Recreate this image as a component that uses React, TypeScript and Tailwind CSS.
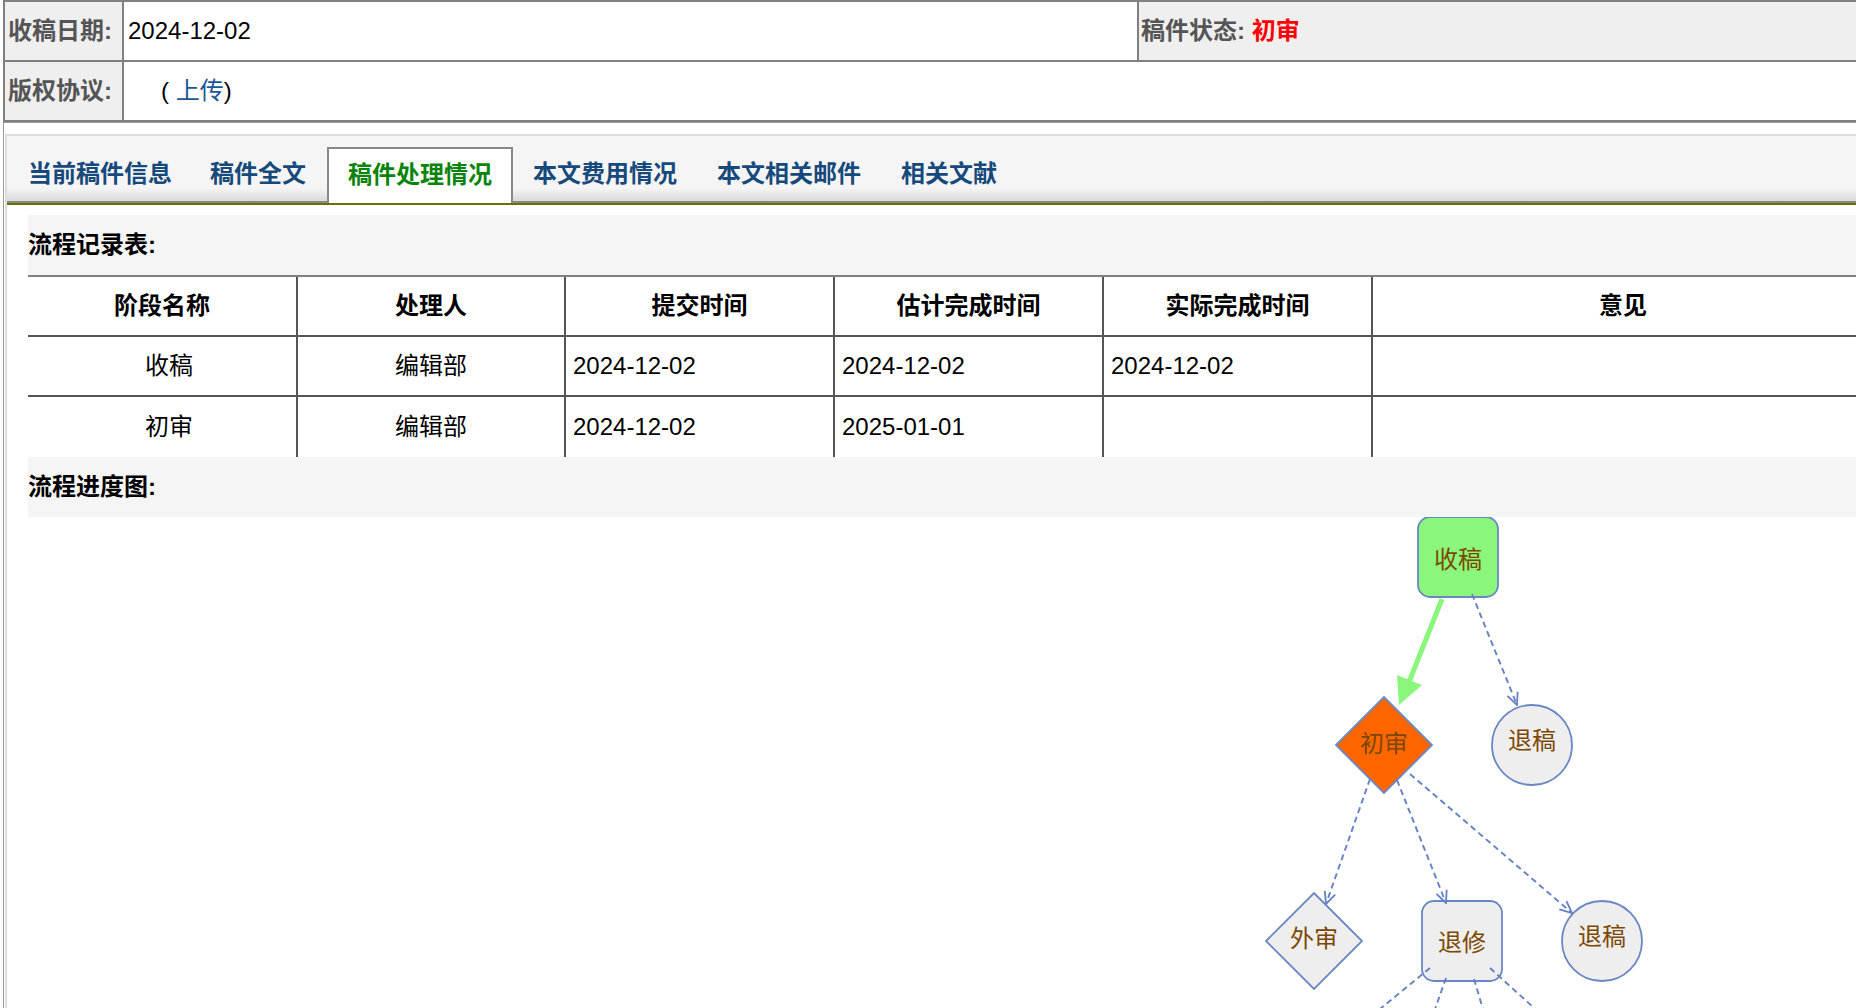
const tabs = [
  { name: "当前稿件信息", active: false },
  { name: "稿件全文", active: false },
  { name: "稿件处理情况", active: true },
  { name: "本文费用情况", active: false },
  { name: "本文相关邮件", active: false },
  { name: "相关文献", active: false },
]

const columns = ["阶段名称", "处理人", "提交时间", "估计完成时间", "实际完成时间", "意见"]

const records = [
  { stage: "收稿", handler: "编辑部", submit: "2024-12-02", planned: "2024-12-02", actual: "2024-12-02", note: "" },
  { stage: "初审", handler: "编辑部", submit: "2024-12-02", planned: "2025-01-01", actual: "", note: "" },
]

// flow chart colours
const EDGE = "#6381c4"
const NODE_STROKE = "#6a87c5"
const NODE_TEXT = "#7c4700"

function NodeLabel({ x, y, children }: { x: number; y: number; children: string }) {
  return (
    <text x={x} y={y + 8} textAnchor="middle" fontSize="24" fill={NODE_TEXT}>
      {children}
    </text>
  )
}

function FlowChart() {
  const dashed = { stroke: EDGE, strokeWidth: 1.9, strokeDasharray: "6 4", fill: "none" }
  return (
    <svg width="1845" height="493" className="block">
      <defs>
        <marker
          id="open-arrow"
          viewBox="0 0 14 14"
          refX="13"
          refY="7"
          markerWidth="14"
          markerHeight="14"
          markerUnits="userSpaceOnUse"
          orient="auto"
        >
          <path d="M1,1.5 L13,7 L1,12.5" fill="none" stroke={EDGE} strokeWidth="1.8" />
        </marker>
      </defs>

      <g transform="translate(0,-1)">
        {/* nodes */}
        <rect x="1390" y="1" width="80" height="80" rx="12" fill="#8af77c" stroke={NODE_STROKE} strokeWidth="1.8" />
        <NodeLabel x={1430} y={44}>收稿</NodeLabel>

        <polygon points="1308,229 1356,181 1404,229 1356,277" fill="#ff6600" stroke={NODE_STROKE} strokeWidth="1.8" />
        <NodeLabel x={1356} y={228}>初审</NodeLabel>

        <circle cx="1504" cy="229" r="40" fill="#eeeeee" stroke={NODE_STROKE} strokeWidth="1.8" />
        <NodeLabel x={1504} y={225}>退稿</NodeLabel>

        <polygon points="1238,425 1286,377 1334,425 1286,473" fill="#eeeeee" stroke={NODE_STROKE} strokeWidth="1.8" />
        <NodeLabel x={1286} y={423}>外审</NodeLabel>

        <rect x="1394" y="385" width="80" height="80" rx="12" fill="#eeeeee" stroke={NODE_STROKE} strokeWidth="1.8" />
        <NodeLabel x={1434} y={427}>退修</NodeLabel>

        <circle cx="1574" cy="425" r="40" fill="#eeeeee" stroke={NODE_STROKE} strokeWidth="1.8" />
        <NodeLabel x={1574} y={421}>退稿</NodeLabel>

        {/* edges */}
        <line x1="1414" y1="83" x2="1381" y2="166" stroke="#8af77c" strokeWidth="5" />
        <polygon points="1369,159 1394,169 1371,189" fill="#8af77c" />

        <line x1="1444" y1="78" x2="1489" y2="189" {...dashed} markerEnd="url(#open-arrow)" />
        <line x1="1342" y1="263" x2="1298" y2="388" {...dashed} markerEnd="url(#open-arrow)" />
        <line x1="1369" y1="264" x2="1418" y2="387" {...dashed} markerEnd="url(#open-arrow)" />
        <line x1="1382" y1="258" x2="1544" y2="397" {...dashed} markerEnd="url(#open-arrow)" />

        <line x1="1402" y1="452" x2="1307" y2="530" {...dashed} />
        <line x1="1418" y1="462" x2="1394" y2="530" {...dashed} />
        <line x1="1446" y1="463" x2="1466" y2="530" {...dashed} />
        <line x1="1462" y1="452" x2="1548" y2="530" {...dashed} />
      </g>
    </svg>
  )
}

export default function App() {
  const activeIndex = tabs.findIndex((t) => t.active)

  return (
    <div className="w-[1856px] h-[1008px] overflow-hidden bg-white text-[24px] leading-none text-black font-['Liberation_Sans','Noto_Sans_CJK_SC',sans-serif]">
      <div className="w-[1900px]">
        {/* manuscript info */}
        <div className="ml-[3px] border-t-2 border-l-2 border-b-2 border-[#808080]">
          <div className="flex h-[60px] border-b-2 border-[#808080]">
            <div className="w-[119px] shrink-0 bg-[#efefef] border-r-2 border-[#808080] flex items-center pl-[3px] font-bold text-[#555]">
              收稿日期:
            </div>
            <div className="w-[1015px] shrink-0 border-r-2 border-[#808080] flex items-center pl-[4px]">
              2024-12-02
            </div>
            <div className="flex-1 bg-[#efefef] flex items-center pl-[2px] font-bold text-[#555]">
              稿件状态:&nbsp;<span className="text-[#ff0000]">初审</span>
            </div>
          </div>
          <div className="flex h-[58px]">
            <div className="w-[119px] shrink-0 bg-[#efefef] border-r-2 border-[#808080] flex items-center pl-[3px] font-bold text-[#555]">
              版权协议:
            </div>
            <div className="flex-1 flex items-center pl-[37px]">
              (&nbsp;<a className="text-[#1a5792]">上传</a>)
            </div>
          </div>
        </div>

        {/* tabs + content */}
        <div className="ml-[3px] border-t border-l border-[#9a9a9a] pt-[11px]">
          <div className="ml-[1px] border-l-2 border-[#dddddd]">
            <div className="flex items-end h-[69px] border-t-2 border-t-[#dddddd] border-b-2 border-b-[#888888] bg-[linear-gradient(180deg,#f5f5f5_80%,#dadada_100%)]">
              {tabs.map((tab, i) =>
                tab.active ? (
                  <div
                    key={tab.name}
                    className="h-[56px] -mb-[2px] flex items-center px-[19px] pb-[2px] border-2 border-b-0 border-[#888888] bg-white font-bold text-[#0a840a]"
                  >
                    {tab.name}
                  </div>
                ) : (
                  <div
                    key={tab.name}
                    className={`h-[54px] flex items-center border-2 border-transparent font-bold text-[#16497c] ${
                      i === 0 ? "pl-[19px] pr-[15px]" : i > activeIndex ? "px-[18px]" : "px-[19px]"
                    }`}
                  >
                    {tab.name}
                  </div>
                )
              )}
            </div>

            <div className="border-t-2 border-[#6b6e00] pt-[10px] pl-[21px]">
              <div className="h-[60px] bg-[#f5f5f5] flex items-center font-bold">流程记录表:</div>

              <div className="w-[1845px] border-t-2 border-[#808080]">
                <div className="grid grid-cols-[268px_268px_269px_269px_269px_1fr] h-[60px] border-b-2 border-[#555]">
                  {columns.map((col, i) => (
                    <div
                      key={col}
                      className={`flex items-center justify-center font-bold ${i > 0 ? "border-l-2 border-[#555]" : ""}`}
                    >
                      {col}
                    </div>
                  ))}
                </div>
                {records.map((r, idx) => (
                  <div
                    key={r.stage}
                    className={`grid grid-cols-[268px_268px_269px_269px_269px_1fr] h-[60px] ${idx < records.length - 1 ? "border-b-2 border-[#555]" : ""}`}
                  >
                    <div className="flex items-center justify-center pl-[14px]">{r.stage}</div>
                    <div className="flex items-center justify-center border-l-2 border-[#555]">{r.handler}</div>
                    <div className="flex items-center pl-[7px] border-l-2 border-[#555]">{r.submit}</div>
                    <div className="flex items-center pl-[7px] border-l-2 border-[#555]">{r.planned}</div>
                    <div className="flex items-center pl-[7px] border-l-2 border-[#555]">{r.actual}</div>
                    <div className="flex items-center pl-[7px] border-l-2 border-[#555]">{r.note}</div>
                  </div>
                ))}
              </div>

              <div className="h-[60px] bg-[#f5f5f5] flex items-center font-bold">流程进度图:</div>

              <FlowChart />
            </div>
          </div>
        </div>
      </div>
    </div>
  )
}
